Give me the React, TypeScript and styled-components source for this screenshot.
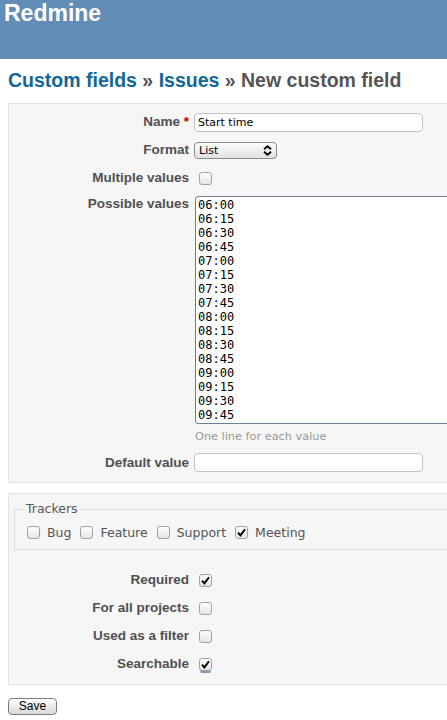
import React from "react";
import styled, {createGlobalStyle, css} from "styled-components";

const GlobalStyle = createGlobalStyle`
    html, body {
        margin: 0;
        padding: 0;
        background: #fff;
        overflow: hidden;
    }

    body {
        font-family: "DejaVu Sans", Verdana, sans-serif;
        font-size: 12px;
        color: #555;
    }
`

const times: string[] = [];
for (let h = 6; h <= 9; h++) {
    for (let m = 0; m < 60; m += 15) {
        times.push(`0${h}:${m === 0 ? "00" : m}`);
    }
}

const trackers = [
    {name: "Bug", checked: false},
    {name: "Feature", checked: false},
    {name: "Support", checked: false},
    {name: "Meeting", checked: true},
];

const options = [
    {name: "Required", checked: true},
    {name: "For all projects", checked: false},
    {name: "Used as a filter", checked: false},
    {name: "Searchable", checked: true, focus: true},
];

const CheckBox: React.FC<{ checked?: boolean; focus?: boolean }> = ({checked, focus}) => (
    <Check $focus={focus}>
        {checked && (
            <svg width="9" height="9" viewBox="0 0 9 9">
                <path d="M1 4.6 L3.4 7.4 L8 1.2" fill="none" stroke="#000" strokeWidth="1.9"/>
            </svg>
        )}
    </Check>
)

export default function App() {
    return (
        <Page>
            <GlobalStyle/>
            <Header>
                <Logo>Redmine</Logo>
            </Header>
            <Main>
                <Breadcrumb>
                    <Crumb href="#">Custom fields</Crumb> » <Crumb href="#">Issues</Crumb> » New custom field
                </Breadcrumb>

                <Box $bottom={10}>
                    <Row>
                        <Label>Name <Required>*</Required></Label>
                        <TextInput value="Start time" readOnly/>
                    </Row>
                    <Row>
                        <Label>Format</Label>
                        <SelectBox>
                            <span>List</span>
                            <svg width="9" height="11" viewBox="0 0 9 11">
                                <path d="M1 4.2 L4.5 1.2 L8 4.2 M1 6.8 L4.5 9.8 L8 6.8" fill="none" stroke="#000"
                                      strokeWidth="1.8"/>
                            </svg>
                        </SelectBox>
                    </Row>
                    <Row>
                        <Label>Multiple values</Label>
                        <CheckCell><CheckBox/></CheckCell>
                    </Row>
                    <Row $top>
                        <Label>Possible values</Label>
                        <Textarea value={times.join("\n")} readOnly/>
                    </Row>
                    <Hint>One line for each value</Hint>
                    <Row $compact>
                        <Label>Default value</Label>
                        <TextInput value="" readOnly/>
                    </Row>
                </Box>

                <Box $bottom={6}>
                    <Fieldset>
                        <Legend>Trackers</Legend>
                        <TrackerList>
                            {trackers.map(t => (
                                <TrackerItem key={t.name}>
                                    <CheckBox checked={t.checked}/>
                                    {t.name}
                                </TrackerItem>
                            ))}
                        </TrackerList>
                    </Fieldset>
                    {options.map(o => (
                        <Row key={o.name}>
                            <Label>{o.name}</Label>
                            <CheckCell><CheckBox checked={o.checked} focus={o.focus}/></CheckCell>
                        </Row>
                    ))}
                </Box>

                <SaveButton>Save</SaveButton>
            </Main>
        </Page>
    )
}

const Page = styled.div`
    width: 760px;
`

const Header = styled.header`
    box-sizing: border-box;
    height: 59px;
    padding: 0 4px;
    background: #628db6;
`

const Logo = styled.h1`
    margin: 0;
    font-family: "Liberation Sans", Arial, sans-serif;
    font-size: 23px;
    line-height: 26px;
    font-weight: bold;
    color: #fff;
`

const Main = styled.main`
    padding: 0 8px;
`

const Breadcrumb = styled.h2`
    margin: 9px 0 11px;
    font-family: "Liberation Sans", Arial, sans-serif;
    font-size: 19.5px;
    line-height: 24px;
    font-weight: bold;
    color: #555;
`

const Crumb = styled.a`
    color: #169;
    text-decoration: none;
`

const Box = styled.div<{ $bottom: number }>`
    background: #f6f6f6;
    border: 1px solid #e2e2e2;
    padding: 4px 0 ${({$bottom}) => $bottom}px;
    margin-bottom: 10px;
`

const Row = styled.div<{ $top?: boolean; $compact?: boolean }>`
    display: grid;
    grid-template-columns: 180px 1fr;
    column-gap: 5px;
    align-items: ${({$top}) => $top ? "start" : "center"};
    min-height: ${({$compact}) => $compact ? 19 : 28}px;

    ${({$top}) => $top && css`
        margin-top: 4px;
    `}
    ${({$compact}) => $compact && css`
        margin-top: 9px;
    `}
`

const Label = styled.label`
    text-align: right;
    font-family: "Liberation Sans", Arial, sans-serif;
    font-size: 13.5px;
    line-height: 16px;
    font-weight: bold;
    color: #505050;
`

const Required = styled.span`
    color: #bb0000;
`

const TextInput = styled.input`
    box-sizing: border-box;
    width: 229px;
    height: 19px;
    margin: 0;
    padding: 0 3px;
    border: 1px solid #c4c4c4;
    border-radius: 4px;
    background: #fff;
    font-family: "DejaVu Sans", Verdana, sans-serif;
    font-size: 11px;
    color: #000;
    outline: none;
`

const SelectBox = styled.div`
    box-sizing: border-box;
    display: flex;
    align-items: center;
    justify-content: space-between;
    width: 83px;
    height: 17px;
    padding: 0 4px 0 4px;
    border: 1px solid #8a8a8a;
    border-radius: 4px;
    background: linear-gradient(#fdfdfd, #e2e2e2);
    font-size: 11px;
    color: #000;
`

const CheckCell = styled.div`
    display: flex;
    padding-left: 5px;
`

const Check = styled.span<{ $focus?: boolean }>`
    box-sizing: border-box;
    display: inline-flex;
    align-items: center;
    justify-content: center;
    flex: none;
    width: 13px;
    height: 13px;
    border: 1px solid #a2a2a2;
    border-radius: 3px;
    background: linear-gradient(#ffffff, #e4e4e4);

    ${({$focus}) => $focus && css`
        box-shadow: 0 3px 0 -1px #7e9cc6;
    `}
`

const Textarea = styled.textarea`
    box-sizing: border-box;
    display: block;
    width: 540px;
    height: 228px;
    margin: 0 0 0 1px;
    padding: 1px 2px 2px;
    border: 1px solid #6b7f95;
    border-radius: 3px;
    background: #fff;
    font-family: "DejaVu Sans Mono", monospace;
    font-size: 12px;
    line-height: 14px;
    color: #000;
    resize: none;
    overflow: hidden;
    outline: none;
`

const Hint = styled.div`
    margin: 6px 0 0 186px;
    font-size: 11.3px;
    line-height: 14px;
    color: #999;
`

const Fieldset = styled.fieldset`
    margin: 3px 0 16px 5px;
    padding: 9px 12px 10px;
    border: 1px solid #dcdcdc;
    min-width: 0;
`

const Legend = styled.legend`
    margin-left: -3px;
    padding: 0 2px;
    font-size: 12.5px;
    line-height: 16px;
    color: #555;
`

const TrackerList = styled.div`
    display: flex;
    align-items: center;
    gap: 9px;
    height: 13px;
`

const TrackerItem = styled.label`
    display: flex;
    align-items: center;
    gap: 7px;
    font-size: 12.5px;
    color: #555;
`

const SaveButton = styled.button`
    box-sizing: border-box;
    display: block;
    width: 49px;
    height: 17px;
    margin: 13px 0 0;
    padding: 0;
    border: 1px solid #7c7c7c;
    border-radius: 4px;
    background: linear-gradient(#fefefe, #d8d8d8);
    font-family: "Liberation Sans", Arial, sans-serif;
    font-size: 12px;
    line-height: 15px;
    color: #000;
`
